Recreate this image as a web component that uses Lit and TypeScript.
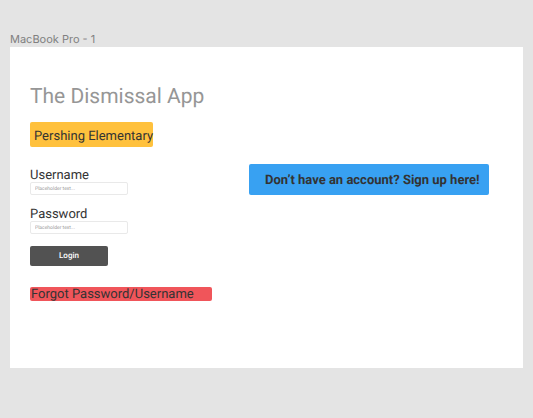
import { LitElement, html, css } from "lit";
import { customElement } from "lit/decorators.js";

@customElement("app-root")
export class AppRoot extends LitElement {
  static styles = css`
    :host {
      display: block;
      box-sizing: border-box;
      min-height: 100vh;
      padding: 32px 10px 50px;
      background: #e4e4e4;
      color: #333;
      font-family: Roboto, "Liberation Sans", sans-serif;
      text-rendering: geometricPrecision;
    }
    * {
      box-sizing: border-box;
    }
    .frame-name {
      margin: 0;
      font: 400 11px/15px Inter, "Liberation Sans", sans-serif;
      color: #808080;
    }
    .frame {
      background: #fff;
      padding: 36px 34px 67px 20px;
    }
    h1 {
      margin: 0 0 11px;
      font-size: 21px;
      line-height: 28px;
      font-weight: 400;
      color: #969696;
    }
    .school {
      display: inline-block;
      vertical-align: top;
      margin: 0;
      padding: 4px 0 0 4px;
      border-radius: 2px;
      background: #ffc13d;
      font-size: 13px;
      line-height: 21px;
      font-weight: 400;
    }
    .columns {
      display: grid;
      grid-template-columns: 219px 1fr;
      align-items: start;
      margin-top: 17px;
    }
    .login {
      display: flex;
      flex-direction: column;
      align-items: flex-start;
      padding-top: 5px;
    }
    .field {
      display: flex;
      flex-direction: column;
    }
    .field + .field {
      margin: 13px 0 12px;
    }
    label {
      font-size: 13px;
      line-height: 13px;
    }
    input {
      width: 98px;
      height: 13px;
      margin: 0;
      padding: 0 4px;
      border: 1px solid #e9e9e9;
      border-radius: 2px;
      background: #fff;
      color: #333;
      font: 5px/11px Roboto, sans-serif;
      text-rendering: inherit;
    }
    input::placeholder {
      color: #9a9a9a;
      opacity: 1;
    }
    .submit {
      width: 78px;
      height: 20px;
      padding: 0;
      border: 0;
      border-radius: 2px;
      background: #525252;
      color: #fff;
      font: 500 8px/20px Roboto, sans-serif;
      text-rendering: inherit;
    }
    a {
      color: #333;
      text-decoration: none;
      border-radius: 2px;
    }
    .forgot {
      width: 182px;
      margin-top: 21px;
      padding: 2px 0 0 1px;
      background: #f0555a;
      font-size: 13px;
      line-height: 12px;
    }
    .signup {
      padding: 2px 0 0 16px;
      background: #38a1f2;
      font-size: 13px;
      line-height: 29px;
      font-weight: 700;
      white-space: nowrap;
    }
  `;

  render() {
    return html`
      <p class="frame-name">MacBook Pro - 1</p>
      <main class="frame">
        <h1>The Dismissal App</h1>
        <h2 class="school">Pershing Elementary</h2>
        <div class="columns">
          <form class="login">
            <div class="field">
              <label for="username">Username</label>
              <input id="username" type="text" placeholder="Placeholder text..." />
            </div>
            <div class="field">
              <label for="password">Password</label>
              <input id="password" type="password" placeholder="Placeholder text..." />
            </div>
            <button class="submit" type="submit">Login</button>
            <a class="forgot" href="#forgot">Forgot Password/Username</a>
          </form>
          <a class="signup" href="#signup">Don’t have an account? Sign up here!</a>
        </div>
      </main>
    `;
  }
}
